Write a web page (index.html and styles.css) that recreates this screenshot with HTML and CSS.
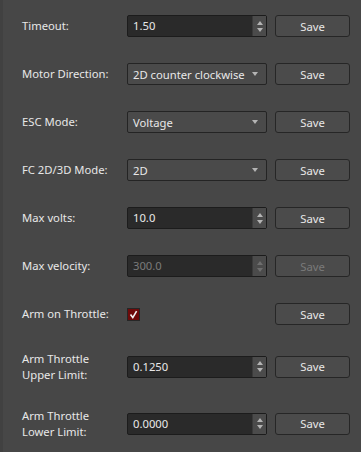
FILE: index.html
```html
<!DOCTYPE html>
<html lang="en">
<head>
    <meta charset="UTF-8">
    <title>Settings</title>
    <link rel="stylesheet" href="styles.css">
</head>
<body>
    <div class="panel">
        <div class="form">
            <label class="label">Timeout:</label>
            <div class="spinbox">
                <span class="value">1.50</span>
                <span class="spin"><i class="up"></i><i class="down"></i></span>
            </div>
            <button class="save">Save</button>

            <label class="label">Motor Direction:</label>
            <div class="combo">
                <span class="value">2D counter clockwise</span>
                <i class="arrow"></i>
            </div>
            <button class="save">Save</button>

            <label class="label">ESC Mode:</label>
            <div class="combo">
                <span class="value">Voltage</span>
                <i class="arrow"></i>
            </div>
            <button class="save">Save</button>

            <label class="label">FC 2D/3D Mode:</label>
            <div class="combo">
                <span class="value">2D</span>
                <i class="arrow"></i>
            </div>
            <button class="save">Save</button>

            <label class="label">Max volts:</label>
            <div class="spinbox">
                <span class="value">10.0</span>
                <span class="spin"><i class="up"></i><i class="down"></i></span>
            </div>
            <button class="save">Save</button>

            <label class="label">Max velocity:</label>
            <div class="spinbox disabled">
                <span class="value">300.0</span>
                <span class="spin"><i class="up"></i><i class="down"></i></span>
            </div>
            <button class="save" disabled>Save</button>

            <label class="label">Arm on Throttle:</label>
            <div class="check-wrap">
                <span class="checkbox">
                    <svg viewBox="0 0 13 13" width="13" height="13">
                        <path d="M3.5 6.5 L5.8 9.6 L9.6 3.2" fill="none" stroke="#f2f2f2" stroke-width="1.6"/>
                    </svg>
                </span>
            </div>
            <button class="save">Save</button>

            <label class="label">Arm Throttle<br>Upper Limit:</label>
            <div class="spinbox">
                <span class="value">0.1250</span>
                <span class="spin"><i class="up"></i><i class="down"></i></span>
            </div>
            <button class="save">Save</button>

            <label class="label">Arm Throttle<br>Lower Limit:</label>
            <div class="spinbox">
                <span class="value">0.0000</span>
                <span class="spin"><i class="up"></i><i class="down"></i></span>
            </div>
            <button class="save">Save</button>
        </div>
    </div>
</body>
</html>
```

FILE: styles.css
```css
* {
    margin: 0;
    padding: 0;
    box-sizing: border-box;
}

body {
    font-family: 'Noto Sans', 'Segoe UI', sans-serif;
    font-size: 11.25px;
    color: #e8e8e8;
    background: #474747;
    width: 361px;
    height: 452px;
    overflow: hidden;
}

.panel {
    height: 100%;
    border-left: 3px solid #414141;
    padding: 15px 11px 0 19px;
}

/* Form grid: label / control / button */
.form {
    display: grid;
    grid-template-columns: 97px 140px 75px;
    column-gap: 8px;
    row-gap: 26px;
    align-items: center;
}

.label {
    line-height: 15.5px;
    white-space: nowrap;
}

.value {
    flex: 1;
    padding-left: 5px;
    white-space: nowrap;
    overflow: hidden;
}

/* Spin box */
.spinbox {
    display: flex;
    align-items: stretch;
    height: 22px;
    line-height: 20px;
    background: #2a2a2a;
    border: 1px solid #1c1c1c;
    border-radius: 2px;
}

.spin {
    width: 14px;
    display: flex;
    flex-direction: column;
    justify-content: center;
    align-items: center;
    gap: 3px;
    background: #4b4b4b;
    border-left: 1px solid #3a3a3a;
}

.spin i {
    width: 0;
    height: 0;
    border-left: 3.5px solid transparent;
    border-right: 3.5px solid transparent;
}

.spin .up {
    border-bottom: 4px solid #b4b4b4;
}

.spin .down {
    border-top: 4px solid #b4b4b4;
}

.spinbox.disabled .value {
    color: #7a7a7a;
}

.spinbox.disabled .spin .up {
    border-bottom-color: #6e6e6e;
}

.spinbox.disabled .spin .down {
    border-top-color: #6e6e6e;
}

/* Combo box */
.combo {
    display: flex;
    align-items: center;
    height: 22px;
    background: #4a4a4a;
    border: 1px solid #242424;
    border-radius: 2px;
    padding-right: 8px;
}

.combo .arrow {
    width: 0;
    height: 0;
    margin-left: 6px;
    border-left: 3.5px solid transparent;
    border-right: 3.5px solid transparent;
    border-top: 4px solid #b4b4b4;
}

/* Checkbox */
.check-wrap {
    display: flex;
    align-items: center;
}

.checkbox {
    display: block;
    width: 13px;
    height: 13px;
    background: #6e0a0a;
    border: 1px solid #262626;
}

.checkbox svg {
    display: block;
    margin: -1px;
}

/* Save button */
.save {
    height: 22px;
    font-family: inherit;
    font-size: 11.25px;
    color: #e8e8e8;
    background: #4b4b4b;
    border: 1px solid #262626;
    border-radius: 3px;
}

.save:disabled {
    color: #7a7a7a;
}
```
